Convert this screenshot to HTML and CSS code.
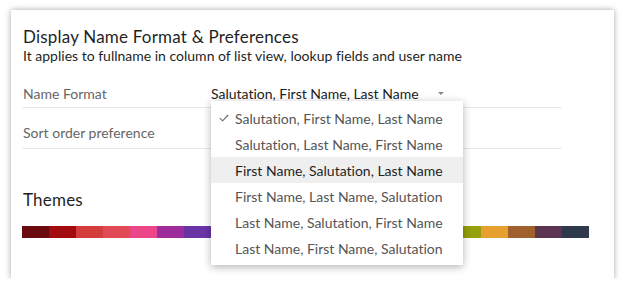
FILE: index.html
```html
<!DOCTYPE html>
<html>
<head>
<meta charset="utf-8">
<link rel="stylesheet" href="styles.css">
</head>
<body>
<div class="card">
  <h1 class="title">Display Name Format &amp; Preferences</h1>
  <p class="subtitle">It applies to fullname in column of list view, lookup fields and user name</p>
  <div class="rows">
    <div class="row row-first">
      <span class="label">Name Format</span>
      <span class="select">Salutation, First Name, Last Name<span class="caret"></span></span>
    </div>
    <div class="row row-second">
      <span class="label">Sort order preference</span>
    </div>
  </div>
  <h2 class="themes-title">Themes</h2>
  <div class="swatches">
    <span class="sw" style="background:#6b0a0e"></span>
    <span class="sw" style="background:#a30b10"></span>
    <span class="sw" style="background:#d43c3c"></span>
    <span class="sw" style="background:#e04b55"></span>
    <span class="sw" style="background:#ea4688"></span>
    <span class="sw" style="background:#9f2c9c"></span>
    <span class="sw" style="background:#6a34a6"></span>
    <span class="sw" style="background:#3f51b5"></span>
    <span class="sw" style="background:#2a7bd4"></span>
    <span class="sw" style="background:#1e9ad6"></span>
    <span class="sw" style="background:#13a3b0"></span>
    <span class="sw" style="background:#129a7a"></span>
    <span class="sw" style="background:#2f9e4a"></span>
    <span class="sw" style="background:#6aa534"></span>
    <span class="sw" style="background:#8ba51c"></span>
    <span class="sw" style="background:#8f9b0c"></span>
    <span class="sw" style="background:#94a00c"></span>
    <span class="sw" style="background:#e8a130"></span>
    <span class="sw" style="background:#a0612c"></span>
    <span class="sw" style="background:#5b3550"></span>
    <span class="sw" style="background:#2e394d"></span>
  </div>
  <ul class="menu">
    <li class="item selected"><svg class="check" width="10" height="8" viewBox="0 0 10 8"><path d="M0.8 4.2 L3.6 6.8 L9.2 1" fill="none" stroke="#666" stroke-width="1.1"/></svg>Salutation, First Name, Last Name</li>
    <li class="item">Salutation, Last Name, First Name</li>
    <li class="item hover">First Name, Salutation, Last Name</li>
    <li class="item">First Name, Last Name, Salutation</li>
    <li class="item">Last Name, Salutation, First Name</li>
    <li class="item">Last Name, First Name, Salutation</li>
  </ul>
</div>
</body>
</html>
```

FILE: styles.css
```css
html, body {
  margin: 0;
  padding: 0;
  background: #ffffff;
}
body {
  font-family: Lato, "Liberation Sans", sans-serif;
  font-variant-ligatures: none;
  color: #222;
}
.card {
  position: relative;
  box-sizing: border-box;
  margin: 10px 0 0 11px;
  width: 603px;
  height: 269px;
  background: #fff;
  box-shadow: 0 0 6px rgba(0, 0, 0, 0.35);
  padding: 17px 0 0 12px;
}
.title {
  margin: 0;
  font-size: 17px;
  font-weight: 400;
  line-height: 20px;
  letter-spacing: 0.2px;
  color: #1f1f1f;
}
.subtitle {
  margin: 0;
  font-size: 14px;
  line-height: 18px;
  color: #1f1f1f;
}
.rows {
  margin-top: 15px;
  width: 540px;
  margin-left: -1px;
}
.row {
  display: flex;
  border-bottom: 1px solid #e8e8e8;
  padding-left: 1px;
}
.row-first {
  height: 27px;
  align-items: center;
}
.row-second {
  height: 41px;
  align-items: flex-end;
  box-sizing: border-box;
  padding-bottom: 6px;
}
.label {
  width: 188px;
  font-size: 14px;
  line-height: 18px;
  color: #666;
}
.select {
  display: flex;
  align-items: center;
  font-size: 14px;
  line-height: 18px;
  color: #222;
}
.caret {
  margin-left: 19px;
  width: 0;
  height: 0;
  border-left: 3px solid transparent;
  border-right: 3px solid transparent;
  border-top: 3px solid #8a8a8a;
}
.themes-title {
  margin: 41px 0 0;
  font-size: 17px;
  font-weight: 400;
  line-height: 20px;
  letter-spacing: 0.2px;
  color: #1f1f1f;
}
.swatches {
  display: flex;
  margin: 16px 0 0 -1px;
}
.sw {
  display: block;
  width: 27px;
  height: 12px;
}
.menu {
  position: absolute;
  left: 200px;
  top: 91px;
  width: 252px;
  margin: 0;
  padding: 4px 0;
  list-style: none;
  background: #fff;
  box-shadow: 0 2px 8px rgba(0, 0, 0, 0.3);
}
.item {
  display: flex;
  align-items: center;
  height: 26px;
  padding-left: 24px;
  font-size: 14px;
  color: #555;
}
.item.selected {
  padding-left: 8px;
}
.check {
  margin-right: 6px;
}
.item.hover {
  background: #efefef;
  color: #1f1f1f;
}
```
